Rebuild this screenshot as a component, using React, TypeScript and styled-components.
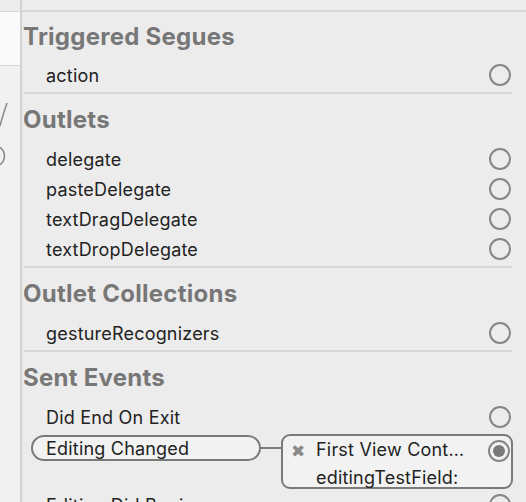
import styled, { createGlobalStyle } from "styled-components";

const GlobalStyle = createGlobalStyle`
  html, body {
    margin: 0;
    padding: 0;
    background: #ececec;
  }
  body {
    font-family: Inter, "Noto Sans", "Liberation Sans", sans-serif;
  }
`;

const Page = styled.div`
  display: flex;
  width: 526px;
  height: 502px;
  overflow: hidden;
  background: #ececec;
`;

const LeftStrip = styled.div`
  width: 20px;
  flex-shrink: 0;
  display: flex;
  flex-direction: column;
  border-right: 2px solid #d2d2d2;
`;

const StripTop = styled.div`
  height: 11px;
  background: #ececec;
  border-bottom: 1px solid #d8d8d8;
`;

const StripWhite = styled.div`
  height: 53px;
  background: #fafafa;
  border-bottom: 1px solid #d8d8d8;
`;

const StripCanvas = styled.div`
  flex: 1;
  background: #f1f1f1;
`;

const Panel = styled.div`
  flex: 1;
  min-width: 0;
`;

const TopBar = styled.div`
  height: 10px;
  border-bottom: 2px solid #d6d6d6;
`;

const Header = styled.div<{ $first?: boolean }>`
  height: ${(p) => (p.$first ? "48px" : "50px")};
  display: flex;
  align-items: center;
  padding-left: 1px;
  font-size: 24px;
  font-weight: 700;
  color: #777777;
  letter-spacing: 0.25px;
`;

const Row = styled.div`
  height: 30px;
  display: flex;
  align-items: center;
  justify-content: space-between;
  padding-left: 24px;
  padding-right: 15px;
  font-size: 18px;
  letter-spacing: 0.2px;
  color: #222222;
`;

const Separator = styled.div`
  height: 2px;
  margin: 2px 14px 0 2px;
  background: #d6d6d6;
`;

const Radio = styled.span<{ $filled?: boolean }>`
  width: 22px;
  height: 22px;
  box-sizing: border-box;
  border: 2px solid #868686;
  border-radius: 50%;
  display: flex;
  align-items: center;
  justify-content: center;
  flex-shrink: 0;
  &::after {
    content: "";
    display: ${(p) => (p.$filled ? "block" : "none")};
    width: 12px;
    height: 12px;
    border-radius: 50%;
    background: #7a7a7a;
  }
`;

const ConnectedRow = styled.div`
  height: 58px;
  box-sizing: border-box;
  display: flex;
  align-items: flex-start;
  padding: 3px 13px 0 9px;
`;

const Pill = styled.div`
  width: 230px;
  height: 26px;
  box-sizing: border-box;
  border: 2px solid #7a7a7a;
  border-radius: 13px;
  background: #f2f2f2;
  display: flex;
  align-items: center;
  padding-left: 13px;
  font-size: 18px;
  letter-spacing: 0.2px;
  color: #222222;
`;

const Connector = styled.div`
  width: 20px;
  height: 2px;
  margin-top: 12px;
  background: #7a7a7a;
`;

const TargetBox = styled.div`
  flex: 1;
  height: 55px;
  margin-top: -1px;
  box-sizing: border-box;
  border: 2px solid #7a7a7a;
  border-radius: 9px;
  background: #f2f2f2;
  display: flex;
  align-items: flex-start;
  padding: 3px 0 0 8px;
`;

const RemoveIcon = styled.span`
  width: 17px;
  height: 24px;
  display: flex;
  align-items: center;
  font-family: "DejaVu Sans", sans-serif;
  font-size: 17px;
  color: #8a8a8a;
`;

const TargetText = styled.div`
  flex: 1;
  display: flex;
  flex-direction: column;
  padding-left: 8px;
  font-size: 18px;
  letter-spacing: 0.2px;
  line-height: 28px;
  margin-top: -3px;
  color: #222222;
  white-space: nowrap;
`;

const TargetRadio = styled.div`
  padding: 1px 1px 0 0;
`;

type Section = { title: string; items: string[] };

const sections: Section[] = [
  { title: "Triggered Segues", items: ["action"] },
  {
    title: "Outlets",
    items: ["delegate", "pasteDelegate", "textDragDelegate", "textDropDelegate"],
  },
  { title: "Outlet Collections", items: ["gestureRecognizers"] },
];

function App() {
  return (
    <>
      <GlobalStyle />
      <Page>
        <LeftStrip>
          <StripTop />
          <StripWhite />
          <StripCanvas>
            <svg width="20" height="120" viewBox="0 0 20 120">
              <path d="M7 37 Q3 48 0 60" stroke="#8a8a8a" strokeWidth="1.5" fill="none" />
              <circle cx="-6" cy="90" r="10.5" stroke="#8a8a8a" strokeWidth="1.5" fill="none" />
            </svg>
          </StripCanvas>
        </LeftStrip>
        <Panel>
          <TopBar />
          {sections.map((s, i) => (
            <div key={s.title}>
              <Header $first={i === 0}>{s.title}</Header>
              {s.items.map((it) => (
                <Row key={it}>
                  {it}
                  <Radio />
                </Row>
              ))}
              <Separator />
            </div>
          ))}
          <Header>Sent Events</Header>
          <Row>
            Did End On Exit
            <Radio />
          </Row>
          <ConnectedRow>
            <Pill>Editing Changed</Pill>
            <Connector />
            <TargetBox>
              <RemoveIcon>✖</RemoveIcon>
              <TargetText>
                <span>First View Cont…</span>
                <span>editingTestField:</span>
              </TargetText>
              <TargetRadio>
                <Radio $filled />
              </TargetRadio>
            </TargetBox>
          </ConnectedRow>
          <Row>
            Editing Did Begin
            <Radio />
          </Row>
        </Panel>
      </Page>
    </>
  );
}

export default App;
